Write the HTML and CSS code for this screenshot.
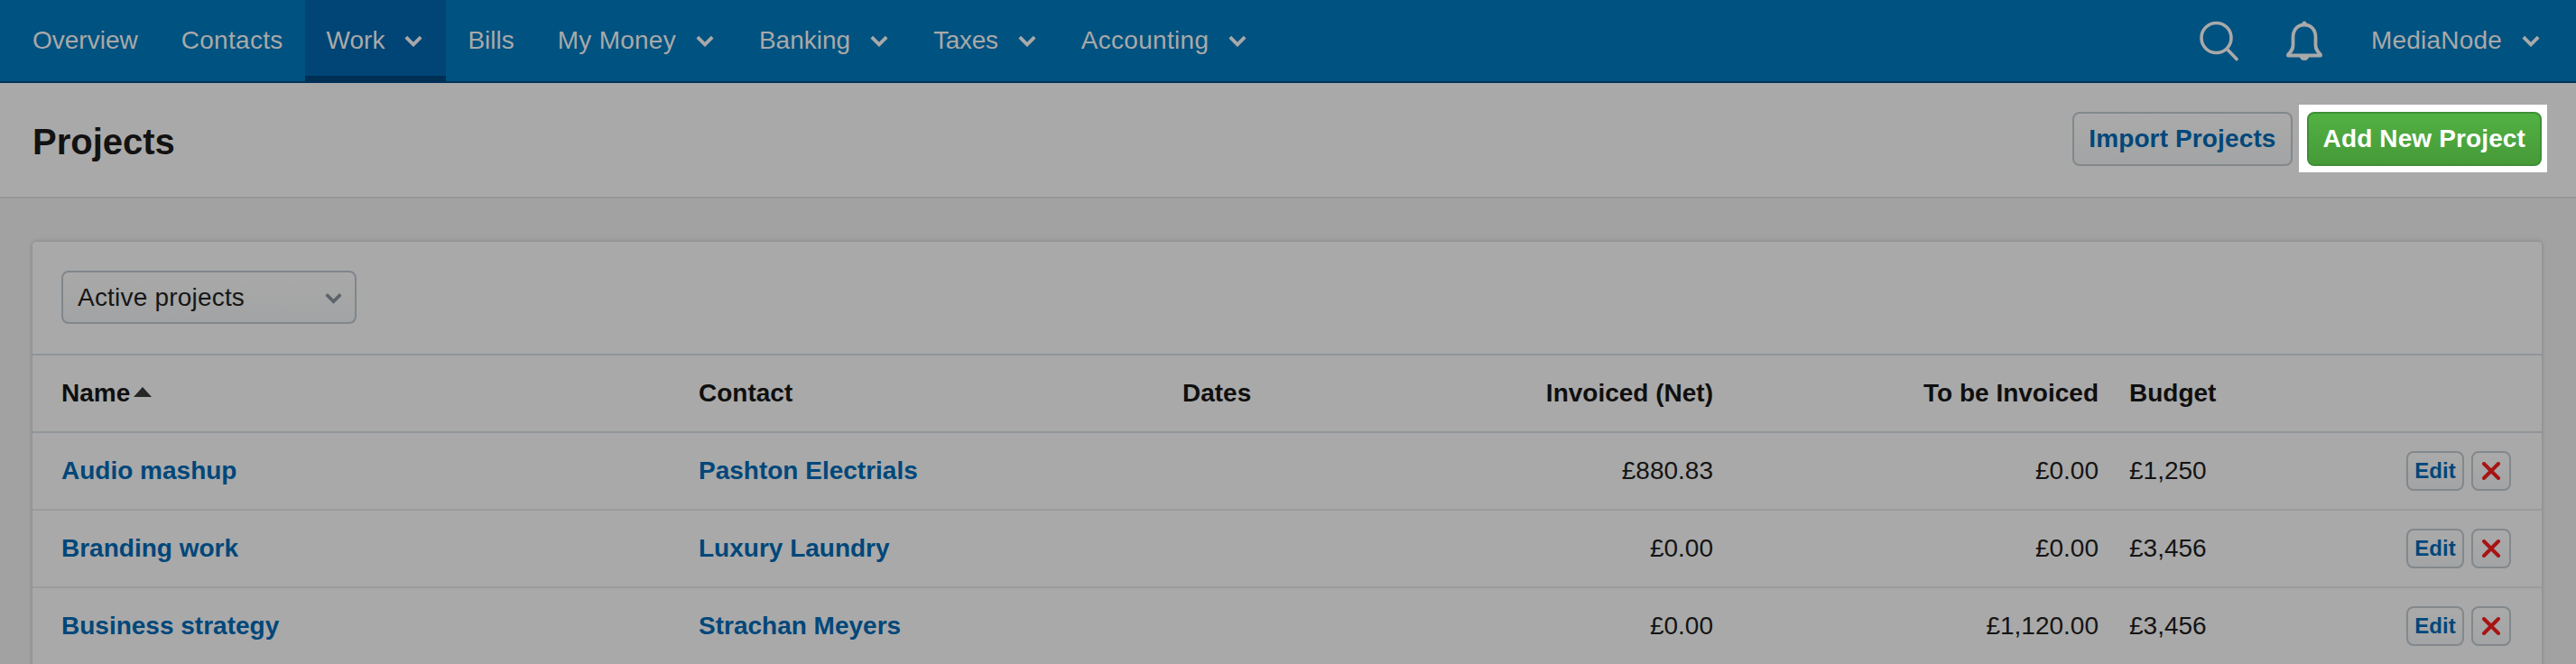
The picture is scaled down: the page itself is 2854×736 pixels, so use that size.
FILE: index.html
```html
<!DOCTYPE html>
<html lang="en">
<head>
<meta charset="utf-8">
<title>Projects</title>
<link rel="stylesheet" href="styles.css">
</head>
<body>
<svg class="sprite" width="0" height="0" aria-hidden="true">
  <symbol id="chev" viewBox="0 0 20 14"><path d="M1.8 3.200 10 11.400 18.200 3.200" fill="none" stroke="currentColor" stroke-width="3.800"/></symbol>
  <symbol id="cross" viewBox="0 0 20 20"><path d="M2 2 18 18M18 2 2 18" fill="none" stroke="currentColor" stroke-width="4" stroke-linecap="round"/></symbol>
</svg>
<nav class="topnav">
  <ul class="menu">
    <li class="menu-item">Overview</li>
    <li class="menu-item wide-a">Contacts</li>
    <li class="menu-item is-active">Work<svg class="chev"><use href="#chev"/></svg></li>
    <li class="menu-item">Bills</li>
    <li class="menu-item wide-b">My Money<svg class="chev"><use href="#chev"/></svg></li>
    <li class="menu-item">Banking<svg class="chev"><use href="#chev"/></svg></li>
    <li class="menu-item tight">Taxes<svg class="chev"><use href="#chev"/></svg></li>
    <li class="menu-item wide-a">Accounting<svg class="chev"><use href="#chev"/></svg></li>
  </ul>
  <div class="tools">
    <svg class="icon-search" viewBox="0 0 46 46" aria-label="Search"><circle cx="20.500" cy="20" r="16.500"/><path d="M32.500 32.500 43 43.500"/></svg>
    <svg class="icon-bell" viewBox="0 0 40 44" aria-label="Notifications"><path d="M20 4.500C12 4.500 7.500 10.500 7.500 18.500V27C7.500 32 5 34.500 2 37.500V38.500H38V37.500C35 34.500 32.500 32 32.500 27V18.500C32.500 10.500 28 4.500 20 4.500Z"/><circle class="bell-solid" cx="20" cy="2.800" r="2.400"/><path class="bell-solid" d="M14.500 39H25.500C25 42 23 44 20 44S15 42 14.500 39Z"/></svg>
    <span class="account">MediaNode<svg class="chev"><use href="#chev"/></svg></span>
  </div>
</nav>
<header class="pagebar">
  <h1 class="title">Projects</h1>
  <div class="actions">
    <a class="btn btn-plain">Import Projects</a>
    <div class="spotlight"><a class="btn btn-green">Add New Project</a></div>
  </div>
</header>
<main class="content">
  <section class="card">
    <div class="filter">
      <div class="select">Active projects<svg class="select-chev"><use href="#chev"/></svg></div>
    </div>
    <table class="grid">
      <colgroup>
        <col class="c-name"><col class="c-contact"><col class="c-dates"><col class="c-inv"><col class="c-tobe"><col class="c-budget"><col class="c-act">
      </colgroup>
      <thead>
        <tr>
          <th>Name<span class="sort"></span></th>
          <th>Contact</th>
          <th>Dates</th>
          <th class="num">Invoiced (Net)</th>
          <th class="num">To be Invoiced</th>
          <th>Budget</th>
          <th></th>
        </tr>
      </thead>
      <tbody>
        <tr>
          <td><a class="link">Audio mashup</a></td>
          <td><a class="link">Pashton Electrials</a></td>
          <td></td>
          <td class="num">£880.83</td>
          <td class="num">£0.00</td>
          <td>£1,250</td>
          <td><div class="row-actions"><a class="mini">Edit</a><a class="mini mini-x"><svg class="cross"><use href="#cross"/></svg></a></div></td>
        </tr>
        <tr>
          <td><a class="link">Branding work</a></td>
          <td><a class="link">Luxury Laundry</a></td>
          <td></td>
          <td class="num">£0.00</td>
          <td class="num">£0.00</td>
          <td>£3,456</td>
          <td><div class="row-actions"><a class="mini">Edit</a><a class="mini mini-x"><svg class="cross"><use href="#cross"/></svg></a></div></td>
        </tr>
        <tr>
          <td><a class="link">Business strategy</a></td>
          <td><a class="link">Strachan Meyers</a></td>
          <td></td>
          <td class="num">£0.00</td>
          <td class="num">£1,120.00</td>
          <td>£3,456</td>
          <td><div class="row-actions"><a class="mini">Edit</a><a class="mini mini-x"><svg class="cross"><use href="#cross"/></svg></a></div></td>
        </tr>
      </tbody>
    </table>
  </section>
</main>
</body>
</html>
```
FILE: styles.css
```css
* { box-sizing: border-box; }
html, body { margin: 0; height: 736px; overflow: hidden; }
body {
  background: #a2a2a2;
  color: #141414;
  font-family: "Liberation Sans", Arial, sans-serif;
  font-size: 28px;
}
.sprite { position: absolute; }

.topnav {
  display: flex;
  justify-content: space-between;
  height: 92px;
  padding: 0 40px 0 12px;
  background: #005280;
  border-bottom: 2px solid #003358;
  color: #a9a9a9;
}
.menu { display: flex; margin: 0; padding: 0; list-style: none; }
.menu-item {
  display: flex;
  align-items: center;
  height: 92px;
  padding: 0 24px 2px;
}
.menu-item.is-active { background: #004575; box-shadow: inset 0 -8px 0 #002f55; }
.wide-a { letter-spacing: .3px; }
.wide-b { letter-spacing: .25px; }
.tight { letter-spacing: -.3px; }
.chev { width: 20px; height: 14px; margin-left: 22px; margin-right: 2px; flex: none; }

.tools { display: flex; align-items: center; height: 90px; }
.icon-search { width: 46px; height: 46px; margin-right: 52px; fill: none; stroke: #a9a9a9; stroke-width: 3.6; stroke-linecap: round; }
.icon-bell { width: 40px; height: 44px; margin-right: 54px; fill: none; stroke: #a9a9a9; stroke-width: 3.8; stroke-linejoin: round; }
.bell-solid { fill: #a9a9a9; stroke: none; }
.account { display: flex; align-items: center; letter-spacing: .2px; }
.account .chev { margin-right: 0; }

.pagebar {
  display: flex;
  justify-content: space-between;
  align-items: center;
  height: 128px;
  padding: 0 32px 3px 36px;
  background: #a9a9a9;
  border-bottom: 2px solid #979797;
}
.title { margin: 8px 0 0; font-size: 40px; font-weight: 700; color: #121212; }
.actions { display: flex; align-items: center; gap: 7px; }
.btn {
  display: block;
  height: 60px;
  padding: 0 16px;
  border: 2px solid;
  border-radius: 8px;
  font-size: 28px;
  font-weight: 700;
  letter-spacing: .13px;
  line-height: 56px;
}
.btn-plain {
  border-color: #83888c;
  background: linear-gradient(#aaaaaa, #a3a4a5);
  color: #00477a;
}
.btn-green {
  border-color: #3f8f36;
  background: linear-gradient(#52b143, #469a38);
  color: #fff;
}
.spotlight { padding: 8px 6px 7px 9px; background: #fff; }

.content { padding: 48px 38px 0 36px; }
.card {
  background: #a9a9a9;
  border-radius: 4px 4px 0 0;
  box-shadow: 0 0 5px rgba(0, 0, 0, .22);
}
.filter { height: 126px; padding-top: 32px; border-bottom: 2px solid #8f9599; }
.select {
  display: flex;
  align-items: center;
  justify-content: space-between;
  width: 327px;
  height: 59px;
  margin-left: 32px;
  padding: 0 14px 0 16px;
  border: 2px solid #80868b;
  border-radius: 8px;
  background: linear-gradient(#a9a9a9, #a2a3a4);
  color: #161616;
  letter-spacing: .2px;
}
.select-chev { width: 19px; height: 14px; color: #5c636a; }

.grid { width: 100%; border-collapse: collapse; table-layout: fixed; }
.c-name { width: 721px; }
.c-contact { width: 536px; }
.c-dates { width: 300px; }
.c-inv { width: 322px; }
.c-tobe { width: 427px; }
.c-budget { width: 258px; }
.c-act { width: 216px; }
.grid th, .grid td { padding: 0 17px; text-align: left; }
.grid th:first-child, .grid td:first-child { padding-left: 32px; }
.grid th:last-child, .grid td:last-child { padding-right: 34px; }
.grid th { height: 85px; border-bottom: 2px solid #8f9599; font-weight: 700; color: #0f0f0f; }
.grid td { height: 86px; border-bottom: 2px solid #9b9b9b; }
.grid .num { text-align: right; }
.sort {
  display: inline-block;
  margin-left: 4px;
  border: 10px solid transparent;
  border-top: 0;
  border-bottom: 11px solid #262626;
  vertical-align: 5px;
}
.link { font-weight: 700; color: #00477a; }
.row-actions { display: flex; justify-content: flex-end; gap: 8px; }
.mini {
  display: flex;
  align-items: center;
  justify-content: center;
  width: 64px;
  height: 44px;
  border: 2px solid #83888c;
  border-radius: 8px;
  background: linear-gradient(#aaaaaa, #a3a4a5);
  font-size: 24px;
  font-weight: 700;
  color: #00477a;
}
.mini-x { width: 44px; color: #a81414; }
.cross { width: 20px; height: 20px; }
```
